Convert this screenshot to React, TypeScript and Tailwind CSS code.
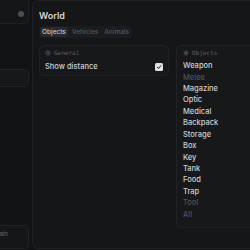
import { Settings, Hash } from 'lucide-react'

const OBJECTS = [
  { label: 'Weapon', on: true },
  { label: 'Melee', on: false },
  { label: 'Magazine', on: true },
  { label: 'Optic', on: true },
  { label: 'Medical', on: true },
  { label: 'Backpack', on: true },
  { label: 'Storage', on: true },
  { label: 'Box', on: true },
  { label: 'Key', on: true },
  { label: 'Tank', on: true },
  { label: 'Food', on: true },
  { label: 'Trap', on: true },
  { label: 'Tool', on: false },
  { label: 'All', on: false },
]

function CardHeader({ icon, title }: { icon: 'gear' | 'hash'; title: string }) {
  return (
    <div className="flex items-center gap-[3px] h-[8px] text-[#5f6166]">
      {icon === 'gear' ? <Settings size={6} strokeWidth={2.5} /> : <Hash size={6} strokeWidth={2.5} />}
      <span className="text-[6px] leading-none font-['DejaVu_Sans_Mono',monospace]">{title}</span>
    </div>
  )
}

export default function App() {
  return (
    <div className="w-[250px] h-[250px] overflow-hidden bg-[#121315] font-['Inter',sans-serif]">
      <div className="flex gap-[3px] w-[320px] h-[249px]">
        {/* Sidebar */}
        <div className="w-[29px] flex flex-col shrink-0">
          <div className="h-[34px] -mt-[10px] pt-[15px] rounded-br-[5px] border-r border-b border-[#202124] bg-[#151618] flex items-center justify-end pr-[4px]">
            <div className="w-[6px] h-[6px] rounded-full bg-[#4d4f54]" />
          </div>
          <div className="mt-[45px] h-[18px] rounded-r-[5px] border-y border-r border-[#222326] bg-[#17181a]" />
          <div className="mt-auto h-[24px] rounded-r-[5px] border-y border-r border-[#222326] bg-[#151618] flex items-start pt-[4px] overflow-hidden">
            <span className="text-[6px] leading-[8px] text-[#6b6d72] -ml-[6px]">Main</span>
          </div>
        </div>

        {/* Main panel */}
        <div className="flex-1 rounded-[6px] border border-[#202124] bg-[#151618] pl-[6px] pt-[9px]">
          <div className="text-[9px] leading-[12px] font-semibold text-[#d6d7da]">World</div>
          <div className="mt-[4px] flex w-fit items-center h-[12px] rounded-[4px] bg-[#1b1c1f] px-[1px] gap-[2px]">
            <span className="h-[10px] px-[2px] rounded-[3px] bg-[#28292d] text-[6.5px] leading-[10px] font-medium text-[#c9cacd]">Objects</span>
            <span className="h-[10px] px-[2px] text-[6.5px] leading-[10px] font-medium text-[#55575c]">Vehicles</span>
            <span className="h-[10px] px-[2px] text-[6.5px] leading-[10px] font-medium text-[#55575c]">Animals</span>
          </div>

          <div className="mt-[7px] grid grid-cols-[130px_130px] gap-[7px] items-start">
            <div className="rounded-[5px] border border-[#212225] bg-[#17181a] pt-[3px] pb-[2px] pl-[5px] pr-[5px]">
              <CardHeader icon="gear" title="General" />
              <div className="mt-[4px] h-[12px] flex items-center justify-between">
                <span className="text-[7.5px] font-medium text-[#cfd0d3]">Show distance</span>
                <span className="w-[8px] h-[8px] rounded-[1.5px] bg-[#e2e3e5] flex items-center justify-center">
                  <svg width="6" height="6" viewBox="0 0 12 12" fill="none" stroke="#1a1b1e" strokeWidth="2" strokeLinecap="round" strokeLinejoin="round">
                    <path d="M2.5 6.5 L5 9 L9.5 3.5" />
                  </svg>
                </span>
              </div>
            </div>

            <div className="rounded-[5px] border border-[#212225] bg-[#17181a] pt-[3px] pb-[7px] pl-[6px]">
              <CardHeader icon="hash" title="Objects" />
              <div className="mt-[3px] flex flex-col">
                {OBJECTS.map(o => (
                  <div
                    key={o.label}
                    className={`h-[11.45px] flex items-center text-[7.5px] font-medium ${o.on ? 'text-[#cfd0d3]' : 'text-[#505257]'}`}
                  >
                    {o.label}
                  </div>
                ))}
              </div>
            </div>
          </div>
        </div>
      </div>
    </div>
  )
}
